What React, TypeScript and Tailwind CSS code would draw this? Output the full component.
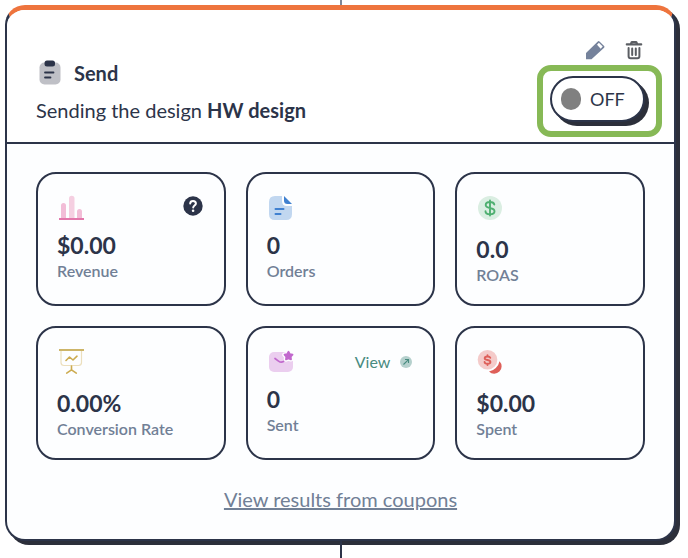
import type { ReactNode } from 'react';

interface Metric {
  label: string;
  value: string;
  icon: ReactNode;
  compact?: boolean;
  extra?: ReactNode;
}

const iconProps = { width: 28, height: 28, viewBox: '0 0 28 28', fill: 'none', 'aria-hidden': true };

function ClipboardIcon() {
  return (
    <svg width="24" height="26" viewBox="0 0 24 26" fill="none" aria-hidden="true">
      <rect x="1.5" y="2.5" width="21" height="22" rx="5" fill="#bfc0c6" />
      <rect x="6.5" y="0.500" width="10.500" height="6" rx="2.500" fill="#2c3449" />
      <path d="M7 12.500h8.500M7 17.500h5.500" stroke="#2c3449" strokeWidth="1.800" strokeLinecap="round" />
    </svg>
  );
}

function PencilIcon() {
  return (
    <svg width="20" height="20" viewBox="0 0 20 20" fill="none" aria-hidden="true">
      <path
        fillRule="evenodd"
        d="M1 19.300v-6.300L12.800 1.500a1.200 1.200 0 0 1 1.700 0l4.600 4.500a1.200 1.200 0 0 1 0 1.700L6.500 19.300H1ZM12 4.800l3.700 3.900 2-2.100-3.800-3.800L12 4.800Z"
        fill="#75829b"
      />
    </svg>
  );
}

function TrashIcon() {
  return (
    <svg width="18" height="20" viewBox="0 0 18 20" fill="none" aria-hidden="true">
      <path d="M1.800 4.400h14.400M6 3.800 6.800 2h4.400l.8 1.800" stroke="#5b5e63" strokeWidth="2.200" strokeLinecap="round" strokeLinejoin="round" />
      <path d="M3.600 8v8.200q0 2 2 2h6.800q2 0 2-2V8M7.200 8.500v6.500M10.800 8.500v6.500" stroke="#5b5e63" strokeWidth="2" strokeLinecap="round" />
    </svg>
  );
}

function BarsIcon() {
  return (
    <svg {...iconProps}>
      <path d="M4 25V11.500a2.500 2.500 0 0 1 5 0V25H4ZM20 25v-7.500a2.500 2.500 0 0 1 5 0V25h-5Z" fill="#f2bdd7" />
      <path d="M12 25V4.500a2.500 2.500 0 0 1 5.500 0V25H12Z" fill="#f5cfe1" />
      <path d="M2 25h25" stroke="#e377ab" strokeWidth="2" />
    </svg>
  );
}

function OrdersIcon() {
  return (
    <svg {...iconProps}>
      <path d="M8 2h7v5q0 5 5 5h5v8q0 6-6 6H8q-6 0-6-6V8q0-6 6-6Z" fill="#c1d7f0" />
      <path d="M17 2v4.500q0 3.500 3.500 3.500H25L17 2Z" fill="#3f80d0" />
      <path d="M8.500 15h8M8.500 20h5" stroke="#3f80d0" strokeWidth="2" strokeLinecap="round" />
    </svg>
  );
}

function RoasIcon() {
  return (
    <svg {...iconProps}>
      <circle cx="14" cy="14" r="12" fill="#daeee2" />
      <path
        d="M18.300 10.500c-.5-2-2-2.500-4.300-2.500-2.500 0-4.300 1-4.300 3s1.800 2.500 4.300 3 4.500 1 4.500 3.200-2 3-4.500 3-4.500-1-4.500-3M14 6.500v15"
        stroke="#4eaf70"
        strokeWidth="1.900"
        strokeLinecap="round"
      />
    </svg>
  );
}

function ConversionIcon() {
  return (
    <svg {...iconProps}>
      <path d="M4 2v12.500q0 3 3 3h14.500q3 0 3-3V2" stroke="#ecdfbd" strokeWidth="1.200" />
      <path d="M2 2h25" stroke="#cdb568" strokeWidth="2" />
      <path d="m9 12.500 3.500-3.500 3.500 3 4-3.800M14.500 18v4M14.500 21.800l-4.800 3.300M14.500 21.800l4.800 3.300" stroke="#ccab50" strokeWidth="1.600" strokeLinecap="round" strokeLinejoin="round" />
    </svg>
  );
}

function SentIcon() {
  return (
    <svg {...iconProps}>
      <rect x="2" y="4" width="24" height="20" rx="5" fill="#ebceef" />
      <path
        d="m21.500 3.800 1.400 2.300 2.600.6-1.800 2 .3 2.600-2.500-1-2.500 1 .3-2.600-1.800-2 2.600-.6 1.400-2.300Z"
        fill="#fdfeff"
        stroke="#fdfeff"
        strokeWidth="4.500"
        strokeLinejoin="round"
      />
      <path d="m21.500 3.800 1.400 2.300 2.600.6-1.800 2 .3 2.600-2.500-1-2.500 1 .3-2.600-1.800-2 2.600-.6 1.400-2.300Z" fill="#c168cd" stroke="#c168cd" strokeWidth="1.800" strokeLinejoin="round" />
      <path d="m8 10.500 3.500 2.600q2.500 1.800 5 .4" stroke="#c168cd" strokeWidth="1.700" strokeLinecap="round" />
    </svg>
  );
}

function SpentIcon() {
  return (
    <svg {...iconProps}>
      <path d="M23.500 13.200a7 7 0 1 1-10.500 10.300q3.800-.4 6.800-3.400t3.700-6.900Z" fill="#de5f59" />
      <circle cx="11.500" cy="11.800" r="9.800" fill="#f4cbca" />
      <path
        d="M14.300 9.800c-.3-1-1.400-1.300-2.800-1.300-1.600 0-2.800.5-2.800 1.700s1.300 1.500 2.800 1.800 2.900.7 2.900 2-1.300 1.800-2.900 1.800-2.800-.6-2.900-1.800M11.500 7.200v1.200M11.500 15.800V17"
        stroke="#de5f59"
        strokeWidth="1.900"
        strokeLinecap="round"
      />
    </svg>
  );
}

function HelpButton() {
  return (
    <button type="button" aria-label="About revenue" className="mt-[2px] cursor-pointer">
      <svg width="20" height="20" viewBox="0 0 20 20" fill="none" aria-hidden="true">
        <circle cx="10" cy="10" r="9.700" fill="#2c3449" />
        <path d="M7.200 7.500C7.300 5.800 8.500 5 10 5s2.900.9 2.900 2.500c0 2-2.700 2.100-2.700 4.100" stroke="white" strokeWidth="2" strokeLinecap="round" />
        <circle cx="10.100" cy="14.800" r="1.300" fill="white" />
      </svg>
    </button>
  );
}

function ViewLink() {
  return (
    <a href="#sent" className="mt-[2px] flex items-center gap-[10px] text-base text-[#488b7f]">
      View
      <svg width="12" height="12" viewBox="0 0 12 12" fill="none" aria-hidden="true">
        <circle cx="6" cy="6" r="6" fill="#b5d0cd" />
        <path d="m3.500 8.500 4.700-4.700M5 3.500h3.500V7" stroke="#488b7f" strokeWidth="1.100" />
      </svg>
    </a>
  );
}

const metrics: Metric[] = [
  { label: 'Revenue', value: '$0.00', icon: <BarsIcon />, compact: true, extra: <HelpButton /> },
  { label: 'Orders', value: '0', icon: <OrdersIcon />, compact: true },
  { label: 'ROAS', value: '0.0', icon: <RoasIcon /> },
  { label: 'Conversion Rate', value: '0.00%', icon: <ConversionIcon /> },
  { label: 'Sent', value: '0', icon: <SentIcon />, compact: true, extra: <ViewLink /> },
  { label: 'Spent', value: '$0.00', icon: <SpentIcon /> },
];

function MetricCard({ label, value, icon, compact, extra }: Metric) {
  return (
    <div className="h-[134px] rounded-[20px] border-2 border-[#2c3449] pt-5 pr-[21px] pl-[19px]">
      <div className={compact ? 'mb-[9px] flex items-start justify-between' : 'mb-[13px] flex items-start justify-between'}>
        {icon}
        {extra}
      </div>
      <p className="text-[23px] leading-7 font-bold">{value}</p>
      <p className="text-base leading-6 font-semibold text-[#718096]">{label}</p>
    </div>
  );
}

export default function App() {
  return (
    <main className="flex min-h-screen flex-col bg-white pr-3 pl-[5px] font-['Lato','Open_Sans',sans-serif] text-[#2c3449]">
      <div className="mx-auto h-[5px] w-[2px] bg-[#7d8798]" />

      <section className="rounded-[20px] border-2 border-t-[5px] border-[#2c3449] border-t-[#ee743d] bg-[#fdfeff] shadow-[4px_4px_0_#2c2f3a]">
        <header className="flex justify-between rounded-t-[18px] border-b-2 border-[#2c3449] bg-white pr-3 pb-[5px] pl-[29px]">
          <div className="pt-[49px]">
            <div className="flex items-center gap-3">
              <span className="pl-[2px]">
                <ClipboardIcon />
              </span>
              <h2 className="text-xl leading-7 font-bold">Send</h2>
            </div>
            <p className="mt-[7px] text-xl leading-8">
              Sending the design <strong className="font-bold">HW design</strong>
            </p>
          </div>

          <div className="flex flex-col items-end pt-[30px]">
            <div className="flex gap-5 pr-[19px]">
              <button type="button" aria-label="Edit" className="cursor-pointer">
                <PencilIcon />
              </button>
              <button type="button" aria-label="Delete" className="cursor-pointer">
                <TrashIcon />
              </button>
            </div>
            <div className="mt-[5px] rounded-[14px] border-6 border-[#87b956] pt-[5px] pr-[11px] pb-[9px] pl-[7px]">
              <button
                type="button"
                role="switch"
                aria-checked="false"
                className="flex h-[46px] w-[95px] cursor-pointer items-center gap-[9px] rounded-full border-2 border-[#2c3449] bg-white pl-[9px] text-lg shadow-[4px_4px_0_#2c2f3a]"
              >
                <span className="h-[22px] w-5 rounded-full bg-[#808080]" />
                OFF
              </button>
            </div>
          </div>
        </header>

        <div className="px-[29px] pt-7 pb-6">
          <div className="grid grid-cols-3 gap-5">
            {metrics.map((metric) => (
              <MetricCard key={metric.label} {...metric} />
            ))}
          </div>
          <div className="mt-[25px] pb-[2px] text-center">
            <a href="#coupons" className="text-xl leading-7 text-[#718096] underline">
              View results from coupons
            </a>
          </div>
        </div>
      </section>

      <div className="mx-auto w-[2px] flex-1 bg-[#2c3449]" />
    </main>
  );
}
